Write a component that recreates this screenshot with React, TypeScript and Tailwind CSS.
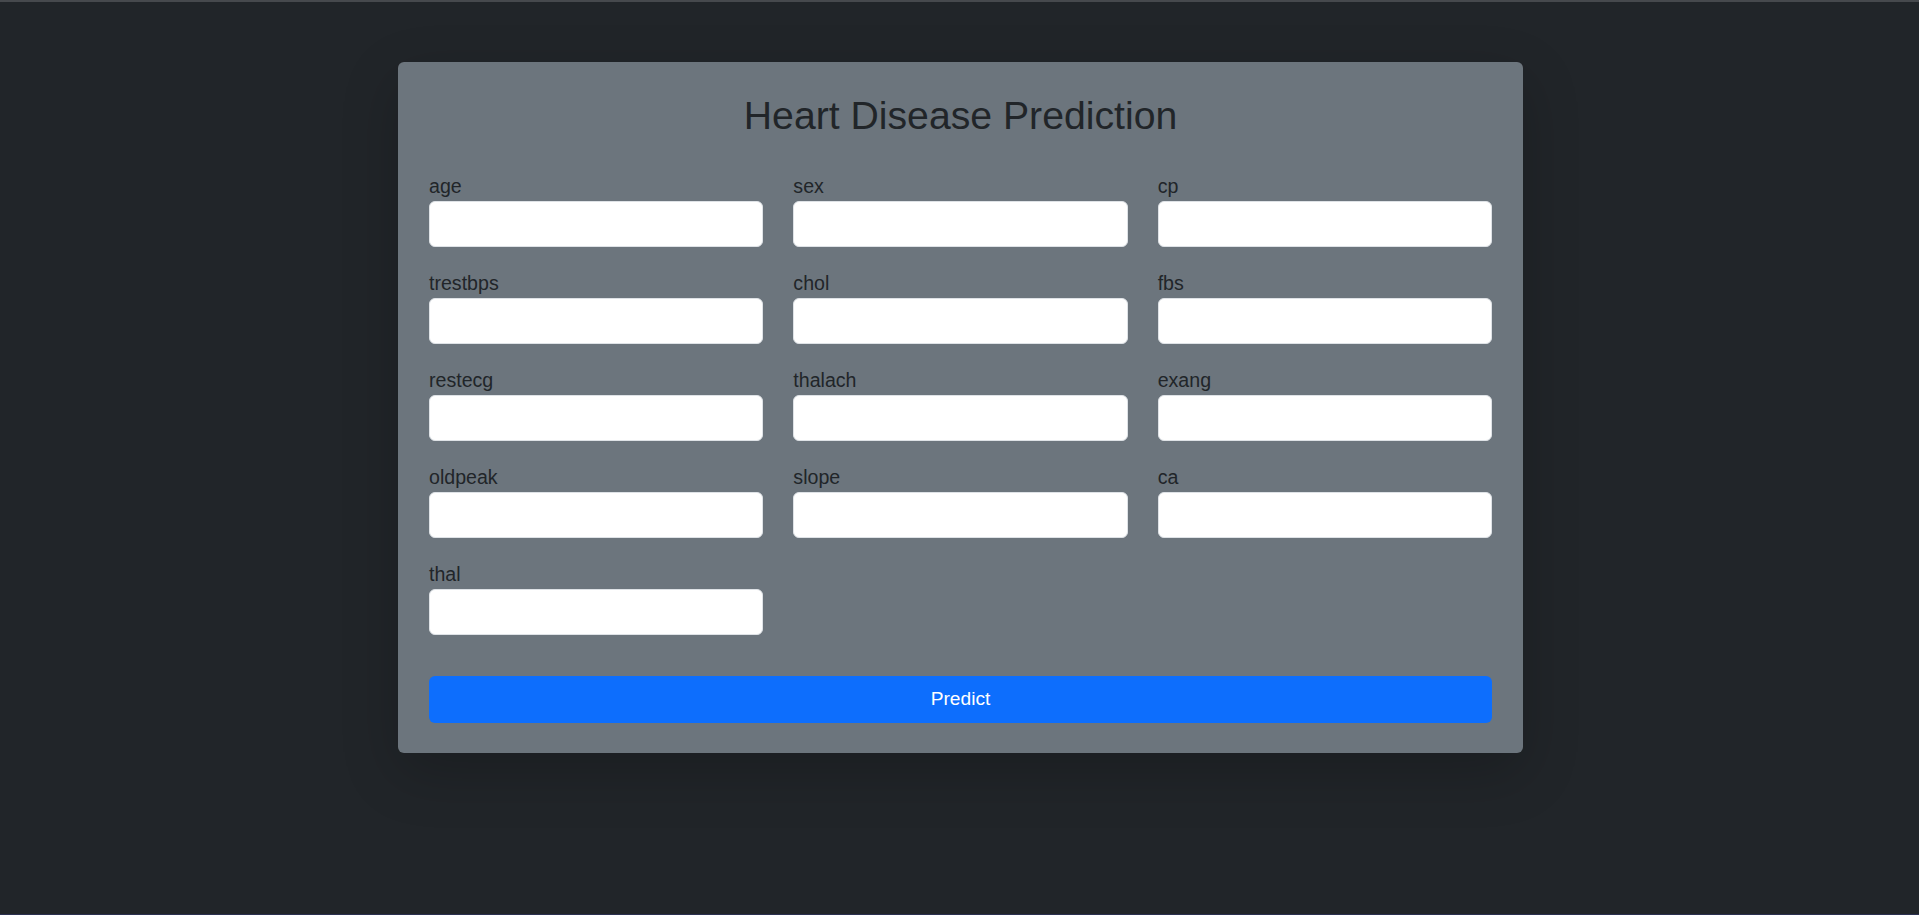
import React from "react";

const fields = [
  "age", "sex", "cp",
  "trestbps", "chol", "fbs",
  "restecg", "thalach", "exang",
  "oldpeak", "slope", "ca",
  "thal",
];

export default function App() {
  return (
    <div
      className="h-[915px] w-full bg-[#212529] flex flex-col overflow-hidden"
      style={{ fontFamily: '"Liberation Sans", Arial, sans-serif' }}
    >
      <div className="h-[2px] w-full bg-[#46494d] shrink-0" />
      <div className="flex-1 flex justify-center pt-[60px] pl-[2px]">
        <form
          className="w-[1125px] h-fit bg-[#6c757d] rounded-[6px] pt-[31px] pb-[30px] px-[31px] shadow-[0_19px_58px_rgba(0,0,0,0.2)]"
          onSubmit={(e) => e.preventDefault()}
        >
          <h2 className="text-center text-[39.2px] leading-[46px] text-[#212529] font-normal">
            Heart Disease Prediction
          </h2>
          <div className="grid grid-cols-3 gap-x-[30px] gap-y-[22px] mt-[33px]">
            {fields.map((f) => (
              <div key={f} className="flex flex-col">
                <label className="text-[19.6px] leading-[29px] text-[#212529]">{f}</label>
                <input
                  type="text"
                  className="h-[46px] w-full bg-white border border-[#dee2e6] rounded-[6px] px-[14px] text-[19px] text-[#212529] outline-none"
                />
              </div>
            ))}
          </div>
          <button
            type="submit"
            className="mt-[41px] w-full h-[47px] bg-[#0d6efd] text-white text-[19.2px] rounded-[6px]"
          >
            Predict
          </button>
        </form>
      </div>
      <div className="h-[1px] w-full bg-[#2b3050] shrink-0" />
    </div>
  );
}
